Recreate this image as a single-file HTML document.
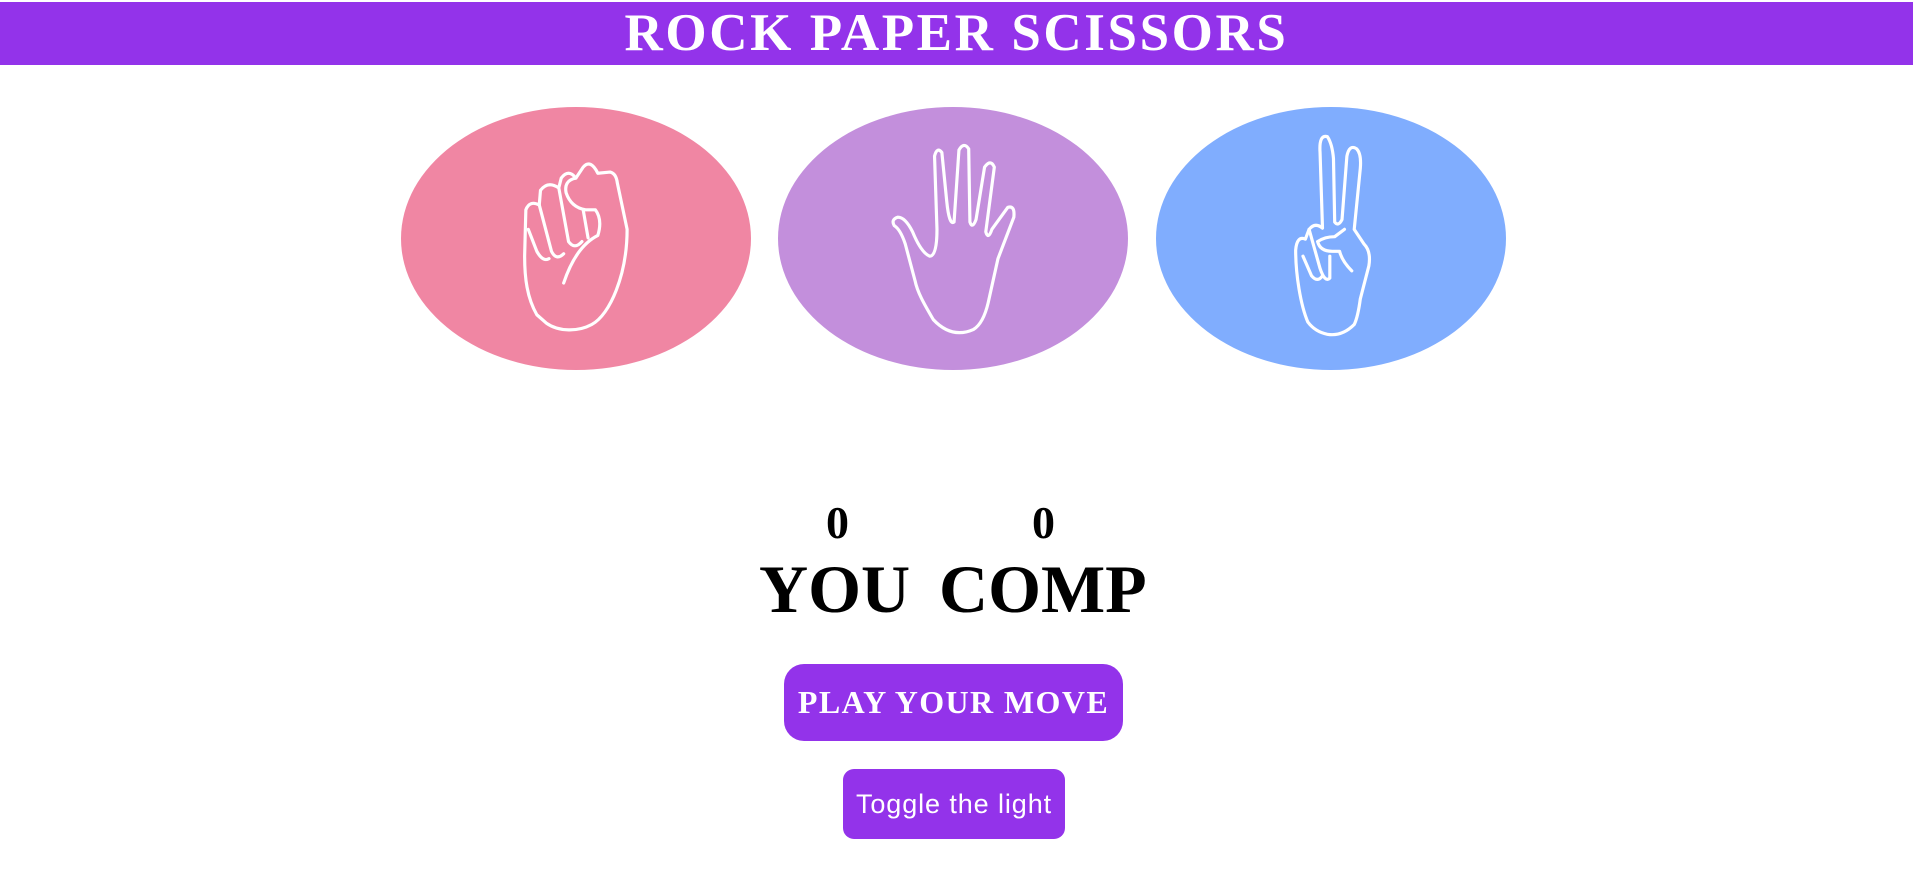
<!DOCTYPE html>
<html><head><meta charset="utf-8"><style>
html,body{margin:0;padding:0;width:1913px;height:884px;overflow:hidden;background:#fff;font-family:"Liberation Serif",serif}
.hdr{position:absolute;left:0;top:2px;width:1913px;height:63px;background:#9333ea;color:#fff;text-align:center;font-weight:bold;font-size:53px;line-height:63px;letter-spacing:2.6px}
.ell{position:absolute;top:107px;width:350px;height:263px;border-radius:50%}
.t{position:absolute;font-weight:bold;color:#000;line-height:1}
.b1{position:absolute;left:784px;top:664px;width:339px;height:77px;background:#9333ea;border-radius:20px;color:#fff;font-weight:bold;font-size:32px;text-align:center;line-height:77px;letter-spacing:1.4px}
.b2{position:absolute;left:843px;top:769px;width:222px;height:70px;background:#9333ea;border-radius:11px;color:#fff;font-family:"Liberation Sans",sans-serif;font-size:27px;text-align:center;line-height:70px;letter-spacing:0.9px}
svg{position:absolute;left:0;top:0}
</style></head><body>
<div class="hdr">ROCK PAPER SCISSORS</div>
<div class="ell" style="left:401px;background:#f086a3"></div>
<div class="ell" style="left:778px;background:#c38fdc"></div>
<div class="ell" style="left:1156px;background:#80adfe"></div>
<svg width="1913" height="884" viewBox="0 0 1568 724.6" fill="none" stroke="#fff" stroke-width="2.6" stroke-linecap="round" stroke-linejoin="round">
<path d="M440,258 C432,244 430,228 430,210 L431,172 Q434,164 442,168 L443,156 Q449,148 458,154 L460,146 Q466,138 472,146 L478,137 Q484,130 490,142 L500,141 Q505,142 506,150 L514,188 C514,225 500,258 485,266 C474,272 458,272 448,265 Z"/>
<path d="M442,168 L452,206 Q456,214 462,208 M458,154 L466,198 Q471,205 477,198 M472,146 Q462,148 464,158 Q468,170 480,172 L488,172 Q494,180 490,193 Q472,202 462,232 M478,172 L482,195 M433,188 L440,206 Q445,215 450,212"/>
<path d="M765,262 C758,250 752,240 750,230 L742,200 Q738,188 733,185 Q730,180 736,178 Q742,178 748,190 Q755,207 762,210 Q768,210 768,188 L766,128 Q768,120 772,125 L776,165 Q778,185 782,182 L786,123 Q790,116 794,122 L795,182 Q797,188 800,180 L807,137 Q812,130 815,137 L808,190 Q810,197 813,188 L826,170 Q832,168 831,178 L818,212 L810,248 Q806,265 798,270 Q780,278 765,262 Z"/>
<path d="M1072,264 C1066,250 1062,225 1062,205 Q1063,193 1070,196 L1073,188 Q1078,182 1084,187 L1082,125 Q1081,110 1088,112 Q1092,118 1093,130 L1094,182 Q1097,186 1100,180 L1104,128 Q1106,118 1112,122 Q1116,126 1115,138 L1110,188 L1118,200 Q1124,206 1122,218 L1115,245 Q1113,260 1110,266 Q1100,276 1088,274 Q1078,272 1072,264 Z"/>
<path d="M1068,210 L1075,226 Q1080,232 1084,226 M1073,188 L1082,220 Q1086,232 1090,228 L1090,210 M1080,198 Q1086,194 1094,194 L1102,188 M1080,198 Q1082,206 1092,206 L1098,206 Q1100,214 1108,222"/>
</svg>
<div class="t" style="left:826px;top:500px;font-size:46px">0</div>
<div class="t" style="left:1032px;top:500px;font-size:46px">0</div>
<div class="t" style="left:759px;top:555px;font-size:68px">YOU</div>
<div class="t" style="left:939px;top:555px;font-size:68px">COMP</div>
<div class="b1">PLAY YOUR MOVE</div>
<div class="b2">Toggle the light</div>
</body></html>
